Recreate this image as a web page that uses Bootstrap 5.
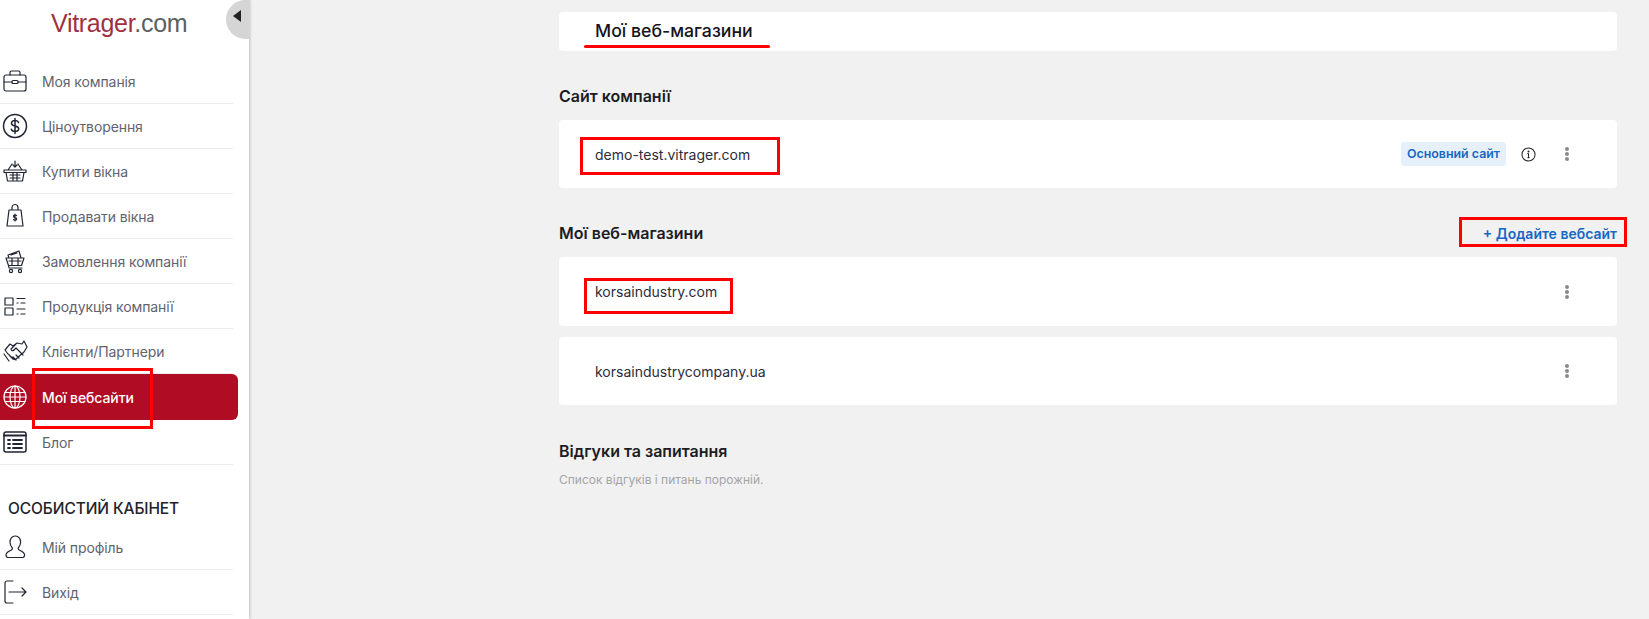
<!DOCTYPE html>
<html lang="uk">
<head>
<meta charset="UTF-8">
<title>Мої веб-магазини</title>
<link href="https://cdn.jsdelivr.net/npm/bootstrap@5.3.0/dist/css/bootstrap.min.css" rel="stylesheet">
<style>
body { background: #f1f1f1; font-family: Inter, "Noto Sans", sans-serif; color: #1c1c24; height: 619px; overflow: hidden; position: relative; }
.side-panel { width: 249px; height: 619px; background: #fff; box-shadow: 1px 0 3px rgba(0,0,0,.2); flex-shrink: 0; position: relative; }
.side-logo { height: 59px; padding: 8px 0 0 51px; font-family: "Liberation Sans", Arial, sans-serif; font-size: 25px; line-height: 30px; letter-spacing: -.3px; color: #5c5f63; }
.side-logo span { color: #a0303f; }
.side-toggle { position: absolute; left: 226px; top: 0; width: 24px; height: 39px; background: #d5d5d5; border-radius: 20px 0 0 20px; }
.side-toggle::after { content: ""; position: absolute; left: 7px; top: 10px; border: 6.5px solid transparent; border-right: 8px solid #222; border-left: 0; }
.side-item { height: 45px; width: 233px; border-bottom: 1.5px solid #ececec; display: flex; align-items: center; font-size: 14px; color: #5f636f; letter-spacing: -.1px; }
.side-item svg { width: 26px; height: 26px; margin: 0 14px 0 2px; flex-shrink: 0; fill: none; stroke: #1f2533; stroke-width: 1.2; stroke-linecap: round; stroke-linejoin: round; }
.side-item.is-active { width: 238px; height: 46px; background: #b00d24; color: #fff; border: 0; border-radius: 0 6px 6px 0; font-weight: 500; }
.side-item.is-active svg { stroke: #fff; }
.side-title { font-size: 15.5px; font-weight: 500; color: #22232a; padding: 32px 0 0 8px; height: 60px; line-height: 24px; letter-spacing: -.1px; }
.content-area { padding: 12px 32px 0 310px; }
.white-box { background: #fff; border-radius: 4px; display: flex; align-items: center; padding-left: 36px; padding-right: 48px; font-size: 14px; color: #2b2d3a; }
.page-head { height: 39px; font-size: 17.7px; font-weight: 500; color: #14141c; margin-bottom: 33px; }
.site-row { height: 68px; }
.site-row.is-tall { height: 69px; margin-bottom: 11px; }
.section-name { font-size: 16px; font-weight: 600; color: #1c1c24; line-height: 24px; height: 24px; margin-bottom: 12px; }
.section-gap { margin-top: 33px; height: 24px; margin-bottom: 12px; }
.section-gap .section-name { margin-bottom: 0; }
.tail-head { margin-top: 34px; margin-bottom: 9px; }
.add-link { color: #1767c4; font-size: 14px; font-weight: 600; text-decoration: none; }
.main-tag { background: #e6f0fa; color: #1767c4; font-size: 12.4px; font-weight: 600; padding: 4px 6px; border-radius: 3px; line-height: 16px; margin-right: 15px; }
.info-icon { margin-right: 29px; }
.dots-btn { display: flex; flex-direction: column; gap: 1px; width: 4px; }
.dots-btn i { width: 4px; height: 4px; border-radius: 50%; background: #8a8a8a; }
.empty-note { font-size: 12px; color: #a4a4a8; line-height: 16px; }
.red-frame { position: absolute; border: 3px solid #fe0000; pointer-events: none; }
.red-line { position: absolute; background: #fe0000; height: 3px; border-radius: 2px; }
.mark-title { left: 584px; top: 45px; width: 186px; }
.mark-demo { left: 580px; top: 137px; width: 200px; height: 38px; }
.mark-add { left: 1459px; top: 217px; width: 168px; height: 30px; }
.mark-korsa { left: 584px; top: 278px; width: 149px; height: 36px; }
.mark-side { left: 32px; top: 368px; width: 121px; height: 61px; }
</style>
</head>
<body>
<div class="d-flex">
  <aside class="side-panel">
    <div class="side-logo"><span>Vitrager</span>.com</div>
    <div class="side-toggle"></div>

    <div class="side-item">
      <svg viewBox="0 0 26 26"><rect x="2" y="7" width="22" height="16" rx="2"/><path d="M2 14h8M16 14h8M8 7V4.500a1.500 1.500 0 0 1 1.500-1.500h7a1.500 1.500 0 0 1 1.500 1.500V7"/><rect x="10" y="12.500" width="6" height="3" rx="1"/></svg>
      Моя компанія
    </div>
    <div class="side-item">
      <svg viewBox="0 0 26 26"><circle cx="13" cy="13" r="11.500" stroke-width="1.500"/><path d="M16.500 9.500c-.5-1.500-2-2-3.500-2s-3.500.8-3.500 2.800c0 4 7.200 1.600 7.200 5.500 0 2-1.900 2.700-3.700 2.700s-3.200-.7-3.700-2.200M13 5.500v15" stroke-width="1.500"/></svg>
      Ціноутворення
    </div>
    <div class="side-item">
      <svg viewBox="0 0 26 26"><path d="M2 12h22v2.500H2zM4 14.500l1.500 8.500h15l1.500-8.500M6 12l4-6M20 12l-4-6M13 3v6M11 7l2 2 2-2M8 17h10M8 20h10M11 15v7M15 15v7"/></svg>
      Купити вікна
    </div>
    <div class="side-item">
      <svg viewBox="0 0 26 26"><path d="M7 7h12l2 16H5zM10 7V4.500a3 3 0 0 1 6 0V7"/><path d="M14.500 12.500c-.8-.8-3-.7-3 .8 0 1.800 3.200.9 3.200 2.700 0 1.400-2.400 1.500-3.300.6M13 11v7"/></svg>
      Продавати вікна
    </div>
    <div class="side-item">
      <svg viewBox="0 0 26 26"><path d="M4 10h18l-2.500 7.500h-13zM7 10l-1-3 11-4 2 7M9 7l6-2M7 13h12M10 10v7M16 10v7M6.500 17.500l.5 2.500h13"/><circle cx="9" cy="23" r="1.600"/><circle cx="18" cy="23" r="1.600"/></svg>
      Замовлення компанії
    </div>
    <div class="side-item">
      <svg viewBox="0 0 26 26"><rect x="3" y="5" width="8" height="7"/><rect x="3" y="15" width="8" height="7"/><path d="M15 5.500h8M15 10h1M19 10h4M15 16h8M15 21h1M19 21h4"/></svg>
      Продукція компанії
    </div>
    <div class="side-item">
      <svg viewBox="0 0 26 26"><path d="M3 12l5-6 3 2 4-3 5 1 2-3 3 6-3 5-8 7c-1.500 1-3 0-3-1l-3-2c-1-1-1-2-2-2zM14 6l-5 5c0 2 2 2 3 1l2-2 7 7M17 20l-3-3M14 22l-3-3M8 18l3 3"/><path d="M2 16l5 7"/></svg>
      Клієнти/Партнери
    </div>
    <div class="side-item is-active">
      <svg viewBox="0 0 26 26"><circle cx="13" cy="13" r="11"/><ellipse cx="13" cy="13" rx="5" ry="11"/><path d="M13 2v22M3 8.500h20M2 13h22M3 17.500h20"/></svg>
      Мої вебсайти
    </div>
    <div class="side-item">
      <svg viewBox="0 0 26 26"><rect x="2" y="3" width="22" height="20" rx="2" stroke-width="1.500"/><path d="M2 6.500h22M6 11h2M11 11h9M6 15h2M11 15h9M6 19h2M11 19h9" stroke-width="1.800"/></svg>
      Блог
    </div>
    <div class="side-title">ОСОБИСТИЙ КАБІНЕТ</div>
    <div class="side-item">
      <svg viewBox="0 0 26 26"><path d="M13 2c-3 0-5 2.800-5 6 0 2.500 1 4.500 2.300 6 .5 1-.5 2-1.800 2.500-2.300 1-4.500 2.200-4.500 4.500 0 1.500 1 2.500 2.300 2.500h14c1.300 0 2.300-1 2.300-2.500 0-2.300-2.200-3.500-4.500-4.500-1.300-.5-2.300-1.500-1.800-2.500 1.300-1.500 2.300-3.500 2.300-6 0-3.200-2-6-5-6z"/></svg>
      Мій профіль
    </div>
    <div class="side-item">
      <svg viewBox="0 0 26 26"><path d="M11 2H5a2 2 0 0 0-2 2v18a2 2 0 0 0 2 2h6M7 13h17M20 9l4 4-4 4"/></svg>
      Вихід
    </div>
  </aside>

  <main class="content-area flex-grow-1">
    <div class="white-box page-head">Мої веб-магазини</div>

    <div class="section-name">Сайт компанії</div>
    <div class="white-box site-row justify-content-between">
      <span>demo-test.vitrager.com</span>
      <div class="d-flex align-items-center">
        <span class="main-tag">Основний сайт</span>
        <svg class="info-icon" width="15" height="15" viewBox="0 0 16 16" fill="none" stroke="#222" stroke-width="1.100"><circle cx="8" cy="8" r="7"/><path d="M8 7v4.500M6.800 7H8M6.800 11.500h2.400"/><circle cx="8" cy="4.800" r=".5" fill="#222"/></svg>
        <span class="dots-btn"><i></i><i></i><i></i></span>
      </div>
    </div>

    <div class="d-flex justify-content-between align-items-center section-gap">
      <div class="section-name">Мої веб-магазини</div>
      <a href="#" class="add-link">+ Додайте вебсайт</a>
    </div>
    <div class="white-box site-row is-tall justify-content-between">
      <span>korsaindustry.com</span>
      <span class="dots-btn"><i></i><i></i><i></i></span>
    </div>
    <div class="white-box site-row justify-content-between">
      <span>korsaindustrycompany.ua</span>
      <span class="dots-btn"><i></i><i></i><i></i></span>
    </div>

    <div class="section-name tail-head">Відгуки та запитання</div>
    <div class="empty-note">Список відгуків і питань порожній.</div>
  </main>
</div>

<!-- red marks drawn over the screenshot -->
<div class="red-line mark-title"></div>
<div class="red-frame mark-demo"></div>
<div class="red-frame mark-add"></div>
<div class="red-frame mark-korsa"></div>
<div class="red-frame mark-side"></div>

<script src="https://cdn.jsdelivr.net/npm/bootstrap@5.3.0/dist/js/bootstrap.bundle.min.js"></script>
</body>
</html>
